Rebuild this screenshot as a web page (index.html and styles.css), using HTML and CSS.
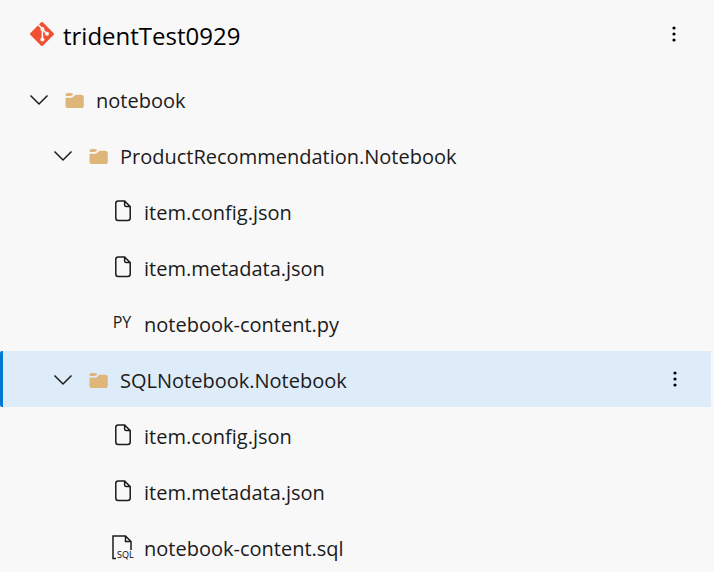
FILE: index.html
```html
<!DOCTYPE html>
<html lang="en">
<head>
    <meta charset="UTF-8">
    <meta name="viewport" content="width=device-width, initial-scale=1.0">
    <title>tridentTest0929</title>
    <link rel="stylesheet" href="styles.css">
</head>
<body>
    <!-- Shared icons -->
    <svg class="icon-defs" aria-hidden="true">
        <symbol id="chevron" viewBox="0 0 20 20">
            <path d="M1.5 6.5 L10 15 L18.5 6.5" fill="none" stroke="#1b1b1b" stroke-width="1.5"/>
        </symbol>
        <symbol id="folder" viewBox="0 0 20 20">
            <path d="M1.5 7 V6 Q1.5 4 3.5 4 H6.8 Q7.8 4 8.5 4.6 L9.2 5.3 L8.3 6.2 Q7.5 7 6.5 7 Z" fill="#dfb67a"/>
            <path d="M1.5 8.7 H7 Q8.3 8.7 9.3 7.7 L10.4 6.6 Q11.2 5.8 12.2 5.8 H17.2 Q19.8 5.8 19.8 8.4 V16.4 Q19.8 19 17.2 19 H4.1 Q1.5 19 1.5 16.4 Z" fill="#dfb67a"/>
        </symbol>
        <symbol id="file" viewBox="0 0 20 24">
            <path d="M6.2 2 H12.6 L18.2 7.6 V18.9 Q18.2 21.4 15.7 21.4 H6.2 Q3.8 21.4 3.8 18.9 V4.4 Q3.8 2 6.2 2 Z M12.6 2.2 V6.1 Q12.6 7.6 14.1 7.6 H18" fill="none" stroke="#1b1b1b" stroke-width="1.5"/>
        </symbol>
        <symbol id="dots" viewBox="0 0 20 20">
            <circle cx="10" cy="4" r="1.6"/>
            <circle cx="10" cy="10" r="1.6"/>
            <circle cx="10" cy="16" r="1.6"/>
        </symbol>
    </svg>

    <div class="repo-panel">
        <header class="repo-header">
            <svg class="git-logo" viewBox="0 0 24 24" aria-hidden="true">
                <path d="M10.9 .5 Q12 -.6 13.1 .5 L23.5 10.9 Q24.6 12 23.5 13.1 L13.1 23.5 Q12 24.6 10.9 23.5 L.5 13.1 Q-.6 12 .5 10.9 Z" fill="#f05033"/>
                <path d="M8.4 2.8 L12.4 6.8 V17.6 M12.4 7.2 L16.8 11.6" fill="none" stroke="#f8f8f8" stroke-width="1.6"/>
                <circle cx="12.4" cy="7" r="2" fill="#f8f8f8"/>
                <circle cx="12.4" cy="17.6" r="2" fill="#f8f8f8"/>
                <circle cx="17" cy="11.8" r="2" fill="#f8f8f8"/>
            </svg>
            <h1>tridentTest0929</h1>
            <button class="more" aria-label="More options"><svg><use href="#dots"/></svg></button>
        </header>

        <ul class="tree">
            <li>
                <div class="row level-1">
                    <button class="toggle" aria-label="Collapse notebook" aria-expanded="true"><svg><use href="#chevron"/></svg></button>
                    <svg class="icon"><use href="#folder"/></svg>
                    <span class="name">notebook</span>
                </div>
                <ul>
                    <li>
                        <div class="row level-2">
                            <button class="toggle" aria-label="Collapse ProductRecommendation.Notebook" aria-expanded="true"><svg><use href="#chevron"/></svg></button>
                            <svg class="icon"><use href="#folder"/></svg>
                            <span class="name">ProductRecommendation.Notebook</span>
                        </div>
                        <ul>
                            <li class="row level-3">
                                <svg class="icon file"><use href="#file"/></svg>
                                <span class="name">item.config.json</span>
                            </li>
                            <li class="row level-3">
                                <svg class="icon file"><use href="#file"/></svg>
                                <span class="name">item.metadata.json</span>
                            </li>
                            <li class="row level-3">
                                <span class="icon py">PY</span>
                                <span class="name">notebook-content.py</span>
                            </li>
                        </ul>
                    </li>
                    <li>
                        <div class="row level-2 selected">
                            <button class="toggle" aria-label="Collapse SQLNotebook.Notebook" aria-expanded="true"><svg><use href="#chevron"/></svg></button>
                            <svg class="icon"><use href="#folder"/></svg>
                            <span class="name">SQLNotebook.Notebook</span>
                            <button class="more" aria-label="More options"><svg><use href="#dots"/></svg></button>
                        </div>
                        <ul>
                            <li class="row level-3">
                                <svg class="icon file"><use href="#file"/></svg>
                                <span class="name">item.config.json</span>
                            </li>
                            <li class="row level-3">
                                <svg class="icon file"><use href="#file"/></svg>
                                <span class="name">item.metadata.json</span>
                            </li>
                            <li class="row level-3">
                                <svg class="icon sql" viewBox="0 0 20 24">
                                    <path d="M4 23.5 H1 V1 H13.5 L19 6.5 V15 M13.5 1 V6.5 H19" fill="none" stroke="#1b1b1b" stroke-width="1.5"/>
                                    <text x="5" y="23" font-size="9">SQL</text>
                                </svg>
                                <span class="name">notebook-content.sql</span>
                            </li>
                        </ul>
                    </li>
                </ul>
            </li>
        </ul>
    </div>
</body>
</html>
```

FILE: styles.css
```css
* {
    box-sizing: border-box;
}

body {
    margin: 0;
    height: 100vh;
    overflow: hidden;
    background-color: #f8f8f8;
    color: #1b1b1b;
    font-family: "Segoe UI", "Open Sans", "Noto Sans", sans-serif;
    font-size: 20px;
}

.icon-defs {
    display: none;
}

.repo-panel {
    padding-right: 3px;
}

/* Header */
.repo-header {
    display: flex;
    align-items: center;
    gap: 9px;
    height: 71px;
    padding: 0 27px 3px 30px;
}

.repo-header h1 {
    margin: 0;
    padding-top: 3px;
    color: #000;
    font-size: 24px;
    font-weight: normal;
    line-height: 32px;
}

.git-logo {
    width: 24px;
    height: 24px;
}

/* Buttons */
button {
    display: flex;
    padding: 0;
    border: none;
    background: none;
    cursor: pointer;
}

button svg {
    width: 20px;
    height: 20px;
}

.more {
    margin-left: auto;
}

/* Tree */
ul {
    margin: 0;
    padding: 0;
    list-style: none;
}

.row {
    display: flex;
    align-items: center;
    height: 56px;
    padding-right: 26px;
}

.row:hover {
    background-color: #eef4fa;
}

.level-1 {
    padding-left: 29px;
}

.level-2 {
    padding-left: 53px;
}

.level-3 {
    padding-left: 112px;
}

.row.selected {
    padding-left: 50px;
    border-left: 3px solid #0078d4;
    border-radius: 2px 0 0 2px;
    background-color: #deebf8;
}

.toggle {
    margin-right: 15px;
}

.icon {
    flex-shrink: 0;
    width: 20px;
    height: 20px;
    margin-right: 12px;
}

.icon.file,
.icon.sql {
    height: 24px;
}

.icon.sql {
    overflow: visible;
}

.icon.py {
    display: flex;
    justify-content: center;
    font-size: 16px;
    line-height: 18px;
}

.name {
    padding-top: 3px;
    line-height: 28px;
}
```
